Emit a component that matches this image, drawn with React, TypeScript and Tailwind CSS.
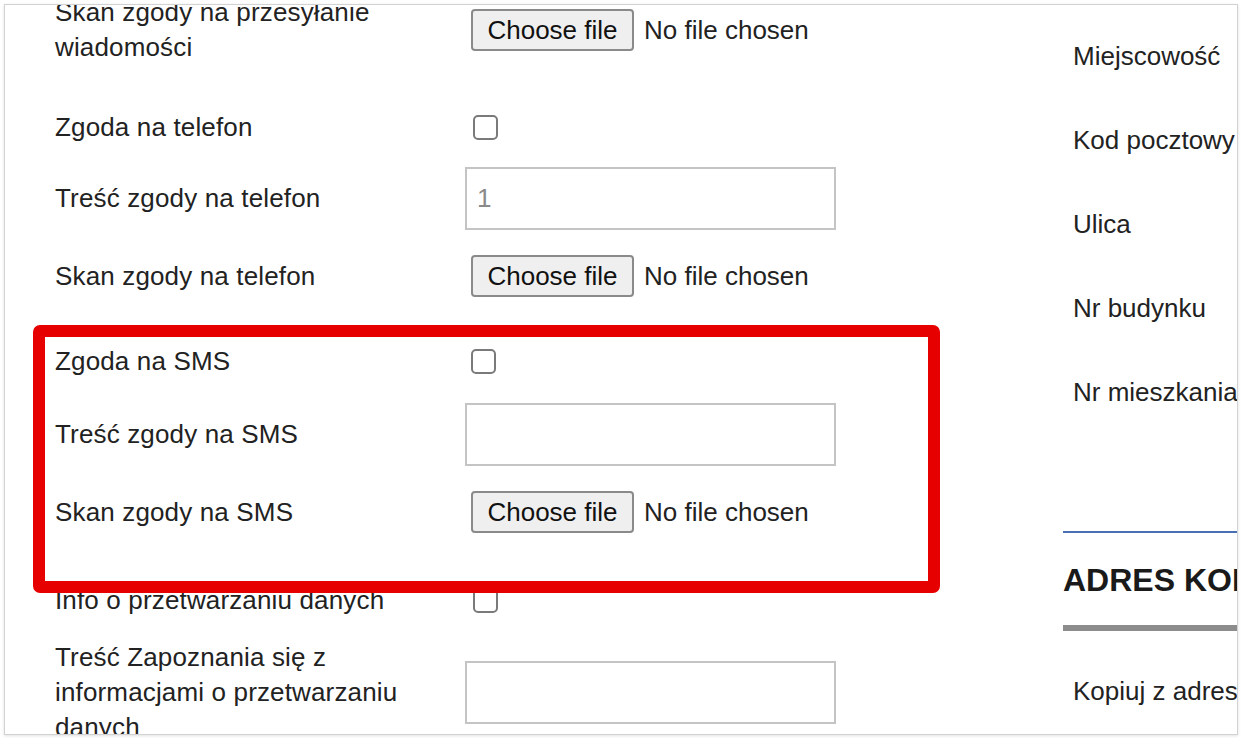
import React from 'react';

const font = { fontFamily: '"Liberation Sans", Arial, Helvetica, sans-serif' };

const FileInput = () => (
  <div className="ml-[6px] flex items-center">
    <span className="flex h-[42px] w-[163px] items-center justify-center rounded-[4px] border-2 border-[#8a8a8a] bg-[#efefef] text-[26px] text-[#111]">
      Choose file
    </span>
    <span className="ml-[10px] text-[26px] text-[#222]">No file chosen</span>
  </div>
);

const Checkbox = ({ offset = 'ml-[8px]' }: { offset?: string }) => (
  <span className={`${offset} block h-[25px] w-[25px] rounded-[5px] border-2 border-[#7a7a7a] bg-white`} />
);

const TextBox = ({ value }: { value?: string }) => (
  <div className="flex h-[63px] w-[371px] items-center border-2 border-[#c4c4c4] bg-white pl-[10px] text-[26px] text-[#8a8a8a]">
    {value}
  </div>
);

const Row = ({ label, className, children }: { label: React.ReactNode; className: string; children: React.ReactNode }) => (
  <div className={`flex items-center ${className}`}>
    <div className="w-[410px] shrink-0 text-[26px] leading-[35px] tracking-[0.15px] text-[#222]">{label}</div>
    {children}
  </div>
);

const App: React.FC = () => {
  return (
    <div className="relative h-[738px] w-[1242px] overflow-hidden bg-white" style={font}>
      {/* framed screenshot */}
      <div className="ml-[4px] mt-[4px] flex h-[731px] w-[1234px] overflow-hidden border border-[#d2d2d2] bg-white shadow-[0_1px_3px_rgba(0,0,0,0.12)]">
        {/* left column */}
        <div className="w-[1058px] shrink-0 pl-[50px]">
          <Row label={<>Skan zgody na przesyłanie<br />wiadomości</>} className="-mt-[10px] h-[70px]">
            <FileInput />
          </Row>
          <Row label="Zgoda na telefon" className="mt-[37px] h-[50px]">
            <Checkbox />
          </Row>
          <Row label="Treść zgody na telefon" className="mt-[15px] h-[63px]">
            <TextBox value="1" />
          </Row>
          <Row label="Skan zgody na telefon" className="mt-[25px] h-[42px]">
            <FileInput />
          </Row>
          <Row label="Zgoda na SMS" className="mt-[44px] h-[40px]">
            <Checkbox offset="ml-[6px]" />
          </Row>
          <Row label="Treść zgody na SMS" className="mt-[22px] h-[63px]">
            <TextBox />
          </Row>
          <Row label="Skan zgody na SMS" className="mt-[25px] h-[42px]">
            <FileInput />
          </Row>
          <Row label="Info o przetwarzaniu danych" className="mt-[47px] h-[40px]">
            <Checkbox />
          </Row>
          <div className="mt-[20px] flex">
            <div className="w-[410px] shrink-0 text-[26px] leading-[35px] tracking-[0.15px] text-[#222]">
              Treść Zapoznania się z<br />informacjami o przetwarzaniu<br />danych
            </div>
            <div className="mt-[21px]">
              <TextBox />
            </div>
          </div>
        </div>

        {/* right column */}
        <div className="w-[400px] shrink-0 text-[#222]">
          <div className="mt-[9px] flex flex-col pl-[10px] text-[26px] whitespace-nowrap">
            <div className="flex h-[84px] items-center">Miejscowość</div>
            <div className="flex h-[84px] items-center">Kod pocztowy</div>
            <div className="flex h-[84px] items-center">Ulica</div>
            <div className="flex h-[84px] items-center">Nr budynku</div>
            <div className="flex h-[84px] items-center">Nr mieszkania</div>
          </div>
          <div className="mt-[97px] h-[2px] bg-[#4a6fb3]" />
          <div className="mt-[27px] flex h-[40px] items-center text-[32px] font-bold whitespace-nowrap text-[#1a1a1a]">
            ADRES KORESPONDENCYJNY
          </div>
          <div className="mt-[25px] h-[6px] bg-[#8c8c8c]" />
          <div className="mt-[40px] flex h-[40px] items-center pl-[10px] text-[26px] whitespace-nowrap">
            Kopiuj z adresu zamieszkania
          </div>
        </div>
      </div>

      {/* red highlight overlay */}
      <div className="pointer-events-none absolute left-[33px] top-[325px] h-[268px] w-[907px] rounded-[7px] border-[12px] border-[#e60000]" />
    </div>
  );
};

export default App;
